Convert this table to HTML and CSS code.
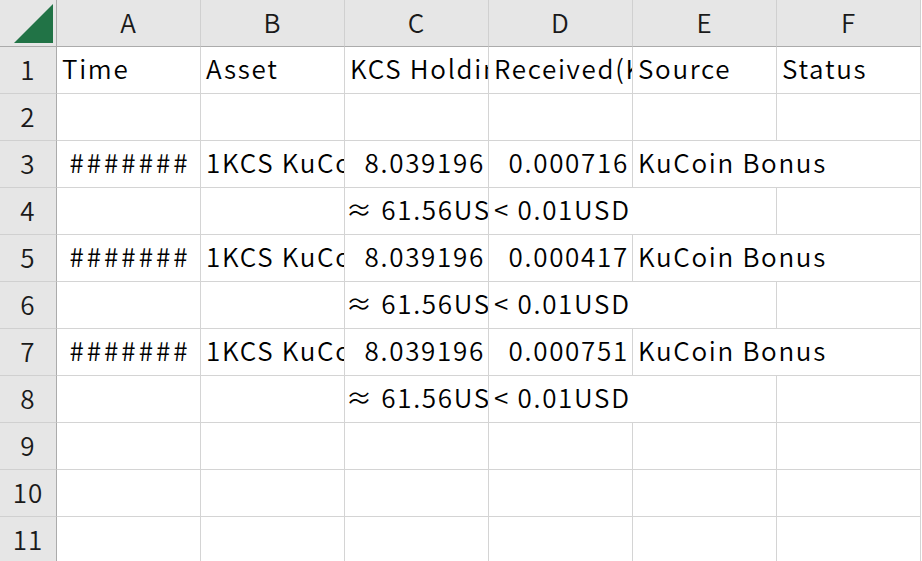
FILE: index.html
```
<!DOCTYPE html>
<html lang="ja">
<head>
<meta charset="UTF-8" />
<title>Book1 - Excel</title>
<link rel="stylesheet" href="styles.css">
</head>
<body>

<!-- SHEET -->
<div class="sheet">
    <!-- column headers -->
    <div class="corner">
        <svg width="56" height="46" viewBox="0 0 56 46"><polygon points="14,43 53,43 53,4" fill="#217346"/></svg>
    </div>
    <div class="col-head">A</div>
    <div class="col-head">B</div>
    <div class="col-head">C</div>
    <div class="col-head">D</div>
    <div class="col-head">E</div>
    <div class="col-head">F</div>

    <!-- row 1 -->
    <div class="row-head">1</div>
    <div class="cell">Time</div>
    <div class="cell">Asset</div>
    <div class="cell">KCS Holdings</div>
    <div class="cell">Received(KCS)</div>
    <div class="cell">Source</div>
    <div class="cell">Status</div>

    <!-- row 2 -->
    <div class="row-head">2</div>
    <div class="cell"></div><div class="cell"></div><div class="cell"></div>
    <div class="cell"></div><div class="cell"></div><div class="cell"></div>

    <!-- row 3 -->
    <div class="row-head">3</div>
    <div class="cell hash">#######</div>
    <div class="cell">1KCS KuCoin</div>
    <div class="cell num">8.039196</div>
    <div class="cell num">0.000716</div>
    <div class="cell span2">KuCoin Bonus</div>

    <!-- row 4 -->
    <div class="row-head">4</div>
    <div class="cell"></div><div class="cell"></div>
    <div class="cell approx">≈ 61.56USD</div>
    <div class="cell span2">&lt; 0.01USD</div>
    <div class="cell"></div>

    <!-- row 5 -->
    <div class="row-head">5</div>
    <div class="cell hash">#######</div>
    <div class="cell">1KCS KuCoin</div>
    <div class="cell num">8.039196</div>
    <div class="cell num">0.000417</div>
    <div class="cell span2">KuCoin Bonus</div>

    <!-- row 6 -->
    <div class="row-head">6</div>
    <div class="cell"></div><div class="cell"></div>
    <div class="cell approx">≈ 61.56USD</div>
    <div class="cell span2">&lt; 0.01USD</div>
    <div class="cell"></div>

    <!-- row 7 -->
    <div class="row-head">7</div>
    <div class="cell hash">#######</div>
    <div class="cell">1KCS KuCoin</div>
    <div class="cell num">8.039196</div>
    <div class="cell num">0.000751</div>
    <div class="cell span2">KuCoin Bonus</div>

    <!-- row 8 -->
    <div class="row-head">8</div>
    <div class="cell"></div><div class="cell"></div>
    <div class="cell approx">≈ 61.56USD</div>
    <div class="cell span2">&lt; 0.01USD</div>
    <div class="cell"></div>

    <!-- rows 9 - 11 -->
    <div class="row-head">9</div>
    <div class="cell"></div><div class="cell"></div><div class="cell"></div>
    <div class="cell"></div><div class="cell"></div><div class="cell"></div>

    <div class="row-head">10</div>
    <div class="cell"></div><div class="cell"></div><div class="cell"></div>
    <div class="cell"></div><div class="cell"></div><div class="cell"></div>

    <div class="row-head">11</div>
    <div class="cell"></div><div class="cell"></div><div class="cell"></div>
    <div class="cell"></div><div class="cell"></div><div class="cell"></div>
</div>

</body>
</html>
```

FILE: styles.css
```
* { margin: 0; padding: 0; box-sizing: border-box; }

html, body {
    width: 922px;
    height: 561px;
    overflow: hidden;
    background: #ffffff;
}

body {
    font-family: "Noto Sans CJK JP", "Noto Sans", sans-serif;
    font-size: 26px;
    font-weight: 350;
    letter-spacing: 1.7px;
    color: #000;
}

.sheet {
    display: grid;
    grid-template-columns: 57px repeat(6, 144px);
    grid-auto-rows: 47px;
}

.corner,
.col-head,
.row-head {
    background: #e6e6e6;
    color: #1a1a1a;
    display: flex;
    align-items: center;
    justify-content: center;
    padding-bottom: 4px;
    letter-spacing: 1px;
}

.corner {
    padding: 0;
    border-right: 1px solid #ababab;
    border-bottom: 1px solid #ababab;
}

.corner svg { display: block; }

.col-head {
    border-right: 1px solid #d0d0d0;
    border-bottom: 1px solid #ababab;
}

.row-head {
    border-right: 1px solid #ababab;
    border-bottom: 1px solid #d0d0d0;
}

.cell {
    border-right: 1px solid #d4d4d4;
    border-bottom: 1px solid #d4d4d4;
    padding: 0 0 5px 5px;
    white-space: nowrap;
    overflow: hidden;
    display: flex;
    align-items: center;
}

.num {
    justify-content: flex-end;
    padding: 0 3px 5px 0;
}

.hash {
    justify-content: center;
    padding: 0 0 5px 3px;
    letter-spacing: 3px;
}

.approx { padding-left: 1px; }

.span2 { grid-column: span 2; }
```
